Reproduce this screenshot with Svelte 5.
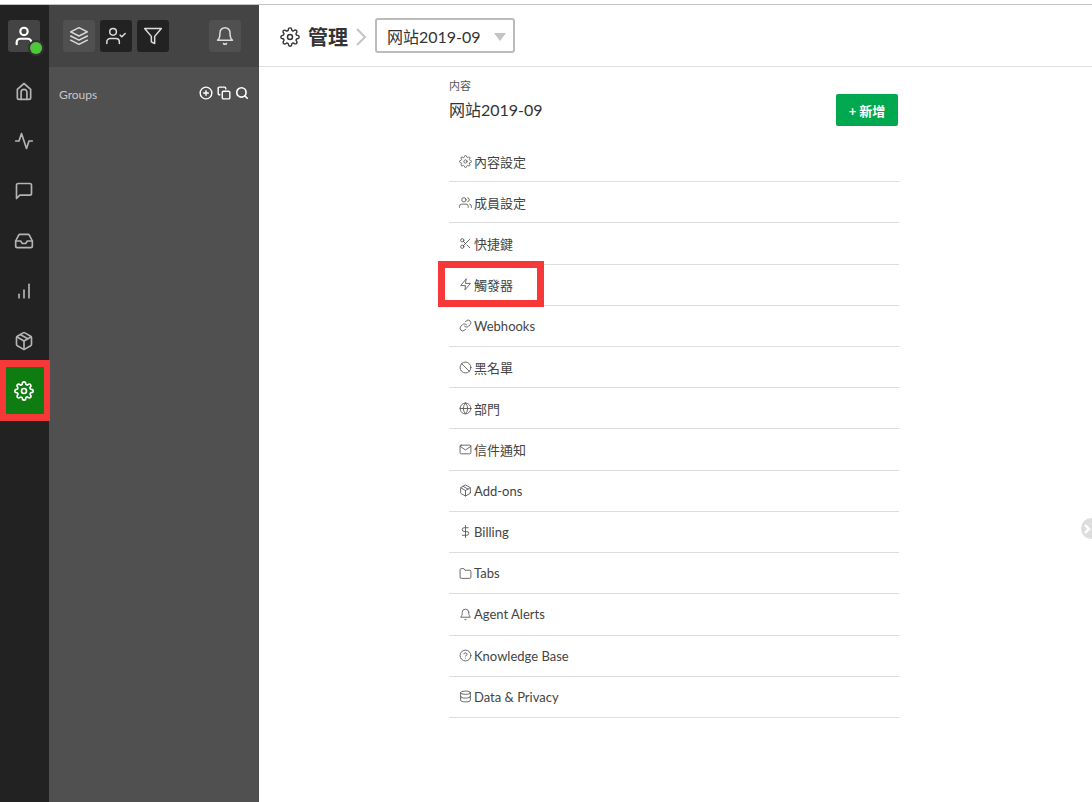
<script>
	const icons = {
		settings: '<circle cx="12" cy="12" r="3"/><path d="M19.4 15a1.65 1.65 0 0 0 .33 1.82l.06.06a2 2 0 0 1 0 2.83 2 2 0 0 1-2.83 0l-.06-.06a1.65 1.65 0 0 0-1.82-.33 1.65 1.65 0 0 0-1 1.51V21a2 2 0 0 1-2 2 2 2 0 0 1-2-2v-.09A1.65 1.65 0 0 0 9 19.4a1.65 1.65 0 0 0-1.82.33l-.06.06a2 2 0 0 1-2.83 0 2 2 0 0 1 0-2.83l.06-.06a1.65 1.65 0 0 0 .33-1.82 1.65 1.65 0 0 0-1.51-1H3a2 2 0 0 1-2-2 2 2 0 0 1 2-2h.09A1.65 1.65 0 0 0 4.6 9a1.65 1.65 0 0 0-.33-1.82l-.06-.06a2 2 0 0 1 0-2.83 2 2 0 0 1 2.83 0l.06.06a1.65 1.65 0 0 0 1.82.33H9a1.65 1.65 0 0 0 1-1.51V3a2 2 0 0 1 2-2 2 2 0 0 1 2 2v.09a1.65 1.65 0 0 0 1 1.51 1.65 1.65 0 0 0 1.82-.33l.06-.06a2 2 0 0 1 2.83 0 2 2 0 0 1 0 2.83l-.06.06a1.65 1.65 0 0 0-.33 1.82V9a1.65 1.65 0 0 0 1.51 1H21a2 2 0 0 1 2 2 2 2 0 0 1-2 2h-.09a1.65 1.65 0 0 0-1.51 1z"/>',
		users: '<path d="M17 21v-2a4 4 0 0 0-4-4H5a4 4 0 0 0-4 4v2"/><circle cx="9" cy="7" r="4"/><path d="M23 21v-2a4 4 0 0 0-3-3.87"/><path d="M16 3.13a4 4 0 0 1 0 7.75"/>',
		scissors: '<circle cx="6" cy="6" r="3"/><circle cx="6" cy="18" r="3"/><line x1="20" y1="4" x2="8.12" y2="15.88"/><line x1="14.47" y1="14.48" x2="20" y2="20"/><line x1="8.12" y1="8.12" x2="12" y2="12"/>',
		zap: '<polygon points="13 2 3 14 12 14 11 22 21 10 12 10 13 2"/>',
		link: '<path d="M10 13a5 5 0 0 0 7.54.54l3-3a5 5 0 0 0-7.07-7.07l-1.72 1.71"/><path d="M14 11a5 5 0 0 0-7.54-.54l-3 3a5 5 0 0 0 7.07 7.07l1.71-1.71"/>',
		slash: '<circle cx="12" cy="12" r="10"/><line x1="4.93" y1="4.93" x2="19.07" y2="19.07"/>',
		globe: '<circle cx="12" cy="12" r="10"/><line x1="2" y1="12" x2="22" y2="12"/><path d="M12 2a15.3 15.3 0 0 1 4 10 15.3 15.3 0 0 1-4 10 15.3 15.3 0 0 1-4-10 15.3 15.3 0 0 1 4-10z"/>',
		mail: '<path d="M4 4h16c1.1 0 2 .9 2 2v12c0 1.1-.9 2-2 2H4c-1.1 0-2-.9-2-2V6c0-1.1.9-2 2-2z"/><polyline points="22,6 12,13 2,6"/>',
		box: '<path d="M21 16V8a2 2 0 0 0-1-1.73l-7-4a2 2 0 0 0-2 0l-7 4A2 2 0 0 0 3 8v8a2 2 0 0 0 1 1.73l7 4a2 2 0 0 0 2 0l7-4A2 2 0 0 0 21 16z"/><polyline points="3.27 6.96 12 12.01 20.73 6.96"/><line x1="12" y1="22.08" x2="12" y2="12"/><line x1="7.5" y1="4.21" x2="16.5" y2="9.4"/>',
		dollar: '<line x1="12" y1="1" x2="12" y2="23"/><path d="M17 5H9.5a3.5 3.5 0 0 0 0 7h5a3.5 3.5 0 0 1 0 7H6"/>',
		folder: '<path d="M22 19a2 2 0 0 1-2 2H4a2 2 0 0 1-2-2V5a2 2 0 0 1 2-2h5l2 3h9a2 2 0 0 1 2 2z"/>',
		bell: '<path d="M18 8A6 6 0 0 0 6 8c0 7-3 9-3 9h18s-3-2-3-9"/><path d="M13.73 21a2 2 0 0 1-3.46 0"/>',
		help: '<circle cx="12" cy="12" r="10"/><path d="M9.09 9a3 3 0 0 1 5.83 1c0 2-3 3-3 3"/><line x1="12" y1="17" x2="12.01" y2="17"/>',
		database: '<ellipse cx="12" cy="5" rx="9" ry="3"/><path d="M21 12c0 1.66-4 3-9 3s-9-1.34-9-3"/><path d="M3 5v14c0 1.66 4 3 9 3s9-1.34 9-3V5"/>',
		home: '<path d="M4 10l8-7 8 7v10a2 2 0 0 1-2 2H6a2 2 0 0 1-2-2z"/><path d="M8.500 22V13.500a3.500 3.500 0 0 1 7 0V22"/>',
		activity: '<polyline points="22 12 18 12 15 21 9 3 6 12 2 12"/>',
		message: '<path d="M21 15a2 2 0 0 1-2 2H7l-4 4V5a2 2 0 0 1 2-2h14a2 2 0 0 1 2 2z"/>',
		inbox: '<polyline points="22 12 16 12 14 15 10 15 8 12 2 12"/><path d="M5.45 5.11L2 12v6a2 2 0 0 0 2 2h16a2 2 0 0 0 2-2v-6l-3.45-6.89A2 2 0 0 0 16.76 4H7.24a2 2 0 0 0-1.79 1.11z"/>',
		bars: '<line x1="18" y1="20" x2="18" y2="4"/><line x1="12" y1="20" x2="12" y2="11"/><line x1="6" y1="20" x2="6" y2="16"/>',
		user: '<path d="M20 21v-2a4 4 0 0 0-4-4H8a4 4 0 0 0-4 4v2"/><circle cx="12" cy="7" r="4"/>',
		layers: '<polygon points="12 2 2 7 12 12 22 7 12 2"/><polyline points="2 17 12 22 22 17"/><polyline points="2 12 12 17 22 12"/>',
		usercheck: '<path d="M16 21v-2a4 4 0 0 0-4-4H5a4 4 0 0 0-4 4v2"/><circle cx="8.5" cy="7" r="4"/><polyline points="17 11 19 13 23 9"/>',
		filter: '<polygon points="22 3 2 3 10 12.46 10 19 14 21 14 12.46 22 3"/>',
		plus: '<circle cx="12" cy="12" r="10"/><line x1="12" y1="8" x2="12" y2="16"/><line x1="8" y1="12" x2="16" y2="12"/>',
		copy: '<rect x="9" y="9" width="13" height="13" rx="2" ry="2"/><path d="M5 15H4a2 2 0 0 1-2-2V4a2 2 0 0 1 2-2h9a2 2 0 0 1 2 2v1"/>',
		search: '<circle cx="11" cy="11" r="8"/><line x1="21" y1="21" x2="16.65" y2="16.65"/>'
	};

	const navItems = ['home', 'activity', 'message', 'inbox', 'bars', 'box', 'settings'];

	const rows = [
		['settings', '內容設定'],
		['users', '成員設定'],
		['scissors', '快捷鍵'],
		['zap', '觸發器'],
		['link', 'Webhooks'],
		['slash', '黑名單'],
		['globe', '部門'],
		['mail', '信件通知'],
		['box', 'Add-ons'],
		['dollar', 'Billing'],
		['folder', 'Tabs'],
		['bell', 'Agent Alerts'],
		['help', 'Knowledge Base'],
		['database', 'Data & Privacy']
	];
</script>

{#snippet icon(name, size, width = 2)}
	<svg
		width={size}
		height={size}
		viewBox="0 0 24 24"
		fill="none"
		stroke="currentColor"
		stroke-width={width}
		stroke-linecap="round"
		stroke-linejoin="round">{@html icons[name]}</svg
	>
{/snippet}

<div class="page">
	<aside class="nav">
		<div class="avatar">
			{@render icon('user', 22, 2.4)}
			<span class="online"></span>
		</div>
		<div class="nav-list">
			{#each navItems as name}
				<div class="nav-item" class:active={name === 'settings'}>
					{@render icon(name, 20)}
				</div>
			{/each}
		</div>
	</aside>

	<section class="panel">
		<div class="panel-top">
			<button class="tool">{@render icon('layers', 20, 1.8)}</button>
			<button class="tool dark">{@render icon('usercheck', 20, 1.8)}</button>
			<button class="tool dark">{@render icon('filter', 20, 1.8)}</button>
			<button class="tool bell">{@render icon('bell', 20, 1.8)}</button>
		</div>
		<div class="groups">
			<span>Groups</span>
			<div class="group-tools">
				{@render icon('plus', 14, 2.4)}
				{@render icon('copy', 14, 2.4)}
				{@render icon('search', 14, 2.8)}
			</div>
		</div>
	</section>

	<main class="main">
		<header class="head">
			<span class="head-gear">{@render icon('settings', 20, 1.7)}</span>
			<h1>管理</h1>
			<svg class="crumb" width="12" height="20" viewBox="0 0 12 20" fill="none" stroke="#c4c4c4" stroke-width="2">
				<polyline points="2,2 10,10 2,18" />
			</svg>
			<div class="select">
				<span>网站2019-09</span>
				<i class="caret"></i>
			</div>
		</header>

		<div class="content">
			<div class="title-row">
				<div>
					<div class="eyebrow">内容</div>
					<div class="title">网站2019-09</div>
				</div>
				<button class="add">+ 新增</button>
			</div>
			<ul class="list">
				{#each rows as [name, label]}
					<li class:marked={name === 'zap'}>
						<span class="row-icon">{@render icon(name, 13, 1.6)}</span>
						<span>{label}</span>
					</li>
				{/each}
			</ul>
		</div>

		<div class="handle">
			<svg width="8" height="12" viewBox="0 0 8 12" fill="none" stroke="#fff" stroke-width="2.4">
				<polyline points="2,2 6,6 2,10" />
			</svg>
		</div>
	</main>
</div>

<style>
	:global(body) {
		margin: 0;
		background: #fff;
		font-family: Lato, 'Noto Sans CJK TC', sans-serif;
	}

	.page {
		display: flex;
		height: 797px;
		margin-top: 4px;
		border-top: 1px solid #c4c4c4;
		overflow: hidden;
	}

	.nav {
		width: 49px;
		flex: none;
		background: #222;
		color: #b4b4b4;
		padding-top: 15px;
		box-sizing: border-box;
		display: flex;
		flex-direction: column;
	}

	.avatar {
		position: relative;
		width: 32px;
		height: 32px;
		margin-left: 8px;
		background: #444;
		border-radius: 3px;
		color: #fff;
		display: flex;
		align-items: center;
		justify-content: center;
	}

	.online {
		position: absolute;
		right: -2px;
		bottom: -2px;
		width: 12px;
		height: 12px;
		border-radius: 50%;
		background: #4fc63c;
		box-shadow: 0 0 0 2px #333;
	}

	.nav-list {
		margin-top: 14px;
		align-self: stretch;
	}

	.nav-item {
		height: 50px;
		box-sizing: border-box;
		padding-right: 1px;
		display: flex;
		align-items: center;
		justify-content: center;
	}

	.nav-item.active {
		position: relative;
		color: #fff;
		background: #0e7c10;
		margin: 1px 5px 0 6px;
		height: 47px;
		padding-right: 2px;
		z-index: 1;
	}

	.nav-item.active::after {
		content: '';
		position: absolute;
		inset: -7px -6px -7px -6px;
		border: solid #f73838;
		border-width: 7px 6px;
	}

	.panel {
		width: 210px;
		flex: none;
		background: #505050;
		color: #d8d8d8;
	}

	.panel-top {
		height: 62px;
		background: #444;
		box-sizing: border-box;
		padding: 15px 18px 0 14px;
		display: flex;
		gap: 5px;
	}

	.tool {
		width: 32px;
		height: 32px;
		padding: 0;
		border: 0;
		border-radius: 3px;
		background: #505050;
		color: #dcdcdc;
		display: flex;
		align-items: center;
		justify-content: center;
	}

	.tool.dark {
		background: #222;
	}

	.tool.bell {
		margin-left: auto;
	}

	.groups {
		display: flex;
		align-items: flex-start;
		justify-content: space-between;
		padding: 19px 10px 0 10px;
		font-size: 12px;
		color: #c8c8c8;
	}

	.groups > span {
		margin-top: 1px;
	}

	.group-tools {
		display: flex;
		gap: 4px;
		color: #fff;
	}

	.main {
		flex: 1;
		position: relative;
		min-width: 0;
	}

	.head {
		height: 62px;
		box-sizing: border-box;
		border-bottom: 1px solid #ddd;
		padding: 13px 0 0 21px;
		display: flex;
		align-items: flex-start;
		color: #333;
	}

	.head-gear {
		margin-top: 9px;
		height: 20px;
	}

	h1 {
		margin: 4px 0 0 8px;
		font-size: 20px;
		line-height: 30px;
		font-weight: 700;
	}

	.crumb {
		margin: 9px 8px 0 7px;
	}

	.select {
		width: 140px;
		height: 35px;
		box-sizing: border-box;
		border: 2px solid #bbb;
		border-radius: 3px;
		padding: 0 7px 0 10px;
		font-size: 16px;
		display: flex;
		align-items: center;
		justify-content: space-between;
	}

	.caret {
		width: 0;
		height: 0;
		margin-top: 2px;
		border: 6px solid transparent;
		border-top: 8px solid #c4c4c4;
		border-bottom: 0;
	}

	.content {
		width: 450px;
		margin-left: 190px;
	}

	.title-row {
		display: flex;
		justify-content: space-between;
		align-items: flex-start;
		padding-top: 11px;
		height: 73.9px;
		box-sizing: border-box;
		color: #333;
	}

	.eyebrow {
		font-size: 11px;
		line-height: 15px;
		color: #555;
	}

	.title {
		margin-top: 5px;
		font-size: 16px;
		line-height: 24px;
	}

	.add {
		margin: 16px 1px 0 0;
		width: 62px;
		height: 32px;
		padding: 0;
		border: 0;
		border-radius: 2px;
		background: #00a94f;
		color: #fff;
		font: 700 13px Lato, 'Noto Sans CJK TC', sans-serif;
	}

	.list {
		list-style: none;
		margin: 0;
		padding: 0;
	}

	li {
		height: 41.22px;
		box-sizing: border-box;
		border-bottom: 1px solid #ddd;
		display: flex;
		align-items: center;
		gap: 2px;
		font-size: 13px;
		color: #444;
	}

	.row-icon {
		width: 23px;
		padding-left: 10px;
		box-sizing: border-box;
		display: flex;
		color: #555;
	}

	li.marked {
		position: relative;
	}

	li.marked::after {
		content: '';
		position: absolute;
		left: -11px;
		top: -4px;
		width: 106px;
		height: 46px;
		box-sizing: border-box;
		border: 7px solid #f73838;
	}

	.handle {
		position: absolute;
		right: -10px;
		top: 513px;
		width: 21px;
		height: 21px;
		border-radius: 50%;
		background: #ddd;
		display: flex;
		align-items: center;
		padding-left: 2px;
		box-sizing: border-box;
	}
</style>
